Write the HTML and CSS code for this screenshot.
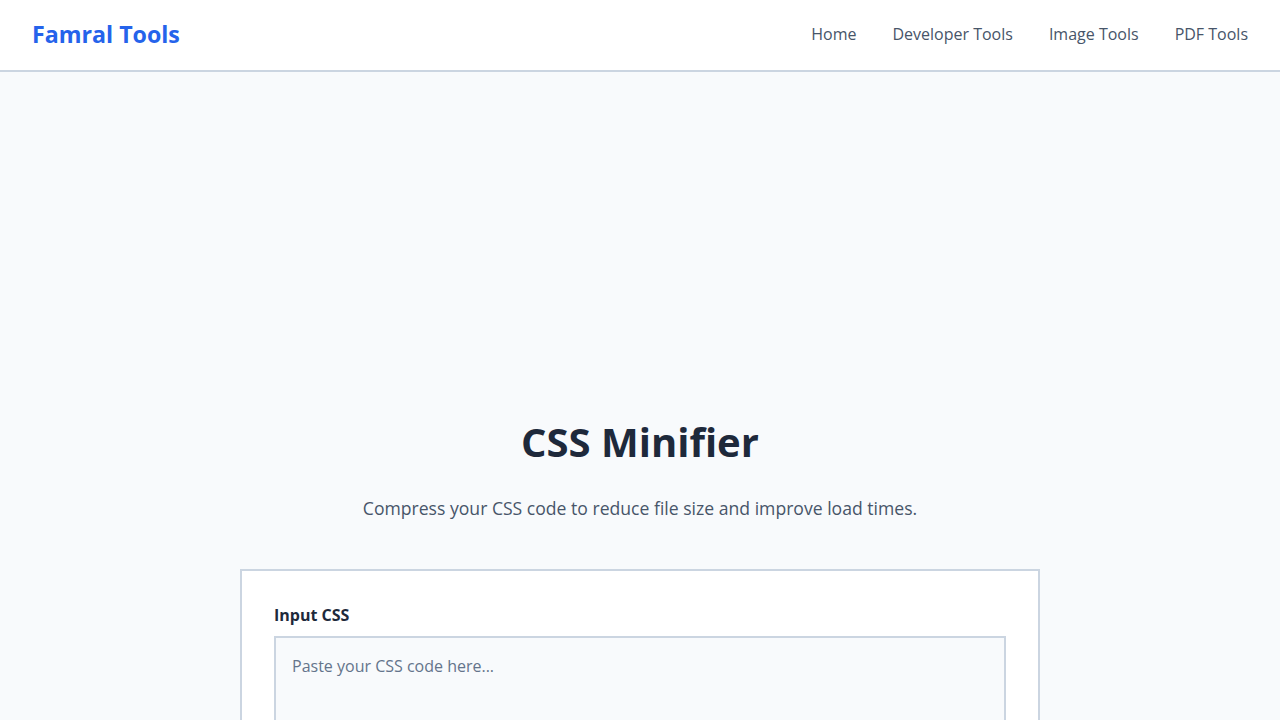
FILE: index.html
```html
<!DOCTYPE html>
<html lang="en">
<head>
<meta charset="utf-8">
<title>CSS Minifier - Famral Tools</title>
<link rel="stylesheet" href="styles.css">
</head>
<body>
<header class="site-header">
  <a class="logo" href="#">Famral Tools</a>
  <nav class="nav">
    <a href="#">Home</a>
    <a href="#">Developer Tools</a>
    <a href="#">Image Tools</a>
    <a href="#">PDF Tools</a>
  </nav>
</header>
<main class="main">
  <div class="ad-slot"></div>
  <h1 class="title">CSS Minifier</h1>
  <p class="subtitle">Compress your CSS code to reduce file size and improve load times.</p>
  <section class="card">
    <label class="label" for="input">Input CSS</label>
    <textarea id="input" class="textarea" placeholder="Paste your CSS code here..."></textarea>
  </section>
</main>
</body>
</html>
```
FILE: styles.css
```css
* { box-sizing: border-box; }
html, body { margin: 0; padding: 0; }
body {
  font-family: "Open Sans", "Noto Sans", sans-serif;
  background: #f8fafc;
  color: #1e293b;
}
.site-header {
  height: 72px;
  background: #ffffff;
  border-bottom: 2px solid #cbd5e1;
  display: flex;
  align-items: center;
  justify-content: space-between;
  padding: 0 32px 2px;
}
.logo {
  font-size: 23.2px;
  font-weight: 700;
  color: #2563eb;
  text-decoration: none;
}
.nav { display: flex; gap: 36px; }
.nav a {
  font-size: 16px;
  color: #475569;
  text-decoration: none;
}
.main {
  display: flex;
  flex-direction: column;
  align-items: center;
}
.ad-slot { height: 346px; width: 100%; }
.title {
  margin: 0;
  font-size: 40px;
  line-height: 48px;
  font-weight: 700;
  color: #1e293b;
}
.subtitle {
  margin: 28px 0 47px;
  font-size: 17.6px;
  line-height: 28px;
  color: #475569;
}
.card {
  width: 800px;
  background: #ffffff;
  border: 2px solid #cbd5e1;
  padding: 32px;
  display: flex;
  flex-direction: column;
}
.label {
  font-size: 16px;
  font-weight: 700;
  color: #1e293b;
  line-height: 24px;
  margin-bottom: 9px;
}
.textarea {
  width: 100%;
  height: 300px;
  border: 2px solid #cbd5e1;
  background: #f8fafc;
  padding: 16px;
  font-family: "Open Sans", "Noto Sans", sans-serif;
  font-size: 16px;
  line-height: 24px;
  color: #1e293b;
  resize: vertical;
}
.textarea::placeholder { color: #64748b; }
```
